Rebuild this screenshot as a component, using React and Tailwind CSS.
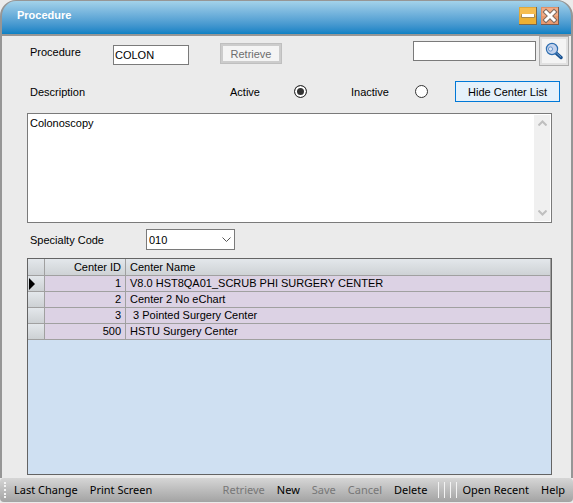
import React, { useState } from "react";

const centers = [
  { id: 1, name: "V8.0 HST8QA01_SCRUB PHI SURGERY CENTER" },
  { id: 2, name: "Center 2 No eChart" },
  { id: 3, name: "\u00a03 Pointed Surgery Center" },
  { id: 500, name: "HSTU Surgery Center" },
];

function TitleBar() {
  return (
    <header className="flex h-9 shrink-0 items-start justify-between rounded-t-2xl border-2 border-t border-[#969696] bg-linear-to-b from-[#a3d2ea] to-[#0881c4] pr-3 pl-[15px]">
      <h1 className="pt-1.5 text-[11px] leading-4 font-bold text-white">Procedure</h1>
      <div className="flex gap-1 pt-1.5">
        <button type="button" aria-label="Minimize" className="size-[18px]">
          <svg viewBox="0 0 18 18" className="size-[18px]">
            <rect width="18" height="18" fill="#7b684c" />
            <rect width="17" height="17" fill="#dfa83c" />
            <rect x="1" y="1" width="16" height="16" fill="#f5bd50" />
            <path d="M1 17V9h16v8z" fill="#edb034" />
            <rect x="2" y="7" width="14" height="4" rx="1" fill="#a88b50" />
            <rect x="3" y="7" width="12" height="3" fill="#fff" />
          </svg>
        </button>
        <button type="button" aria-label="Close" className="size-[18px]">
          <svg viewBox="0 0 18 18" className="size-[18px]">
            <rect width="18" height="18" fill="#7b5a4c" />
            <rect width="17" height="17" fill="#df9068" />
            <rect x="1" y="1" width="16" height="16" fill="#f2aa84" />
            <path d="M1 17V9h16v8z" fill="#e99a70" />
            <path d="M5 5l8 8M13 5l-8 8" stroke="#806b60" strokeWidth="5" strokeLinecap="square" />
            <path d="M5 5l8 8M13 5l-8 8" stroke="#fff" strokeWidth="3" strokeLinecap="square" />
          </svg>
        </button>
      </div>
    </header>
  );
}

function SearchIcon() {
  return (
    <svg viewBox="0 0 18 18" className="size-[18px]">
      <path d="M11 11l5 4.500" stroke="#174f8e" strokeWidth="3.400" strokeLinecap="round" />
      <path d="M11.500 11l4.300 4" stroke="#6fa3d6" strokeWidth="1" strokeLinecap="round" />
      <circle cx="7" cy="7" r="5.600" fill="#c3d2ec" stroke="#2e6eb0" strokeWidth="1.200" />
      <circle cx="5.500" cy="7" r="2.100" fill="#dce8f8" stroke="#6c98cd" />
    </svg>
  );
}

function Chevron({ className }) {
  return (
    <svg viewBox="0 0 9 6" className={className} fill="none" stroke="currentColor">
      <path d="M0.500 0.500l4 4 4-4" />
    </svg>
  );
}

function StatusRadio({ id, checked, onChange }) {
  return (
    <input
      id={id}
      type="radio"
      name="status"
      checked={checked}
      onChange={onChange}
      className="size-[13px] appearance-none rounded-full border border-[#333] bg-white checked:bg-[#333] checked:shadow-[inset_0_0_0_2px_#fff]"
    />
  );
}

function CenterTable() {
  return (
    <div className="min-h-[217px] flex-1 border border-[#646464] bg-[#cfe0f2]">
      <table className="w-full table-fixed border-separate border-spacing-0 text-[11px] leading-[15px]">
        <colgroup>
          <col className="w-[17px]" />
          <col className="w-[81px]" />
          <col />
        </colgroup>
        <thead>
          <tr className="h-[17px] bg-linear-to-b from-[#e3e7eb] to-[#cdd1d4]">
            <th aria-label="Row" className="border-r border-b border-[#a0a0a0] p-0" />
            <th className="border-r border-b border-[#a0a0a0] py-0 pr-1 pl-0 text-right font-normal">Center ID</th>
            <th className="border-r border-b border-[#a0a0a0] py-0 pr-0 pl-1 text-left font-normal">Center Name</th>
          </tr>
        </thead>
        <tbody>
          {centers.map((center, index) => (
            <tr key={center.id} className="h-4 bg-[#dcd2e4]">
              <td className="border-r border-b border-[#a0a0a0] bg-linear-to-b from-[#e3e7eb] to-[#cdd1d4] p-0">
                {index === 0 && (
                  <svg viewBox="0 0 6 12" className="ml-px h-3 w-1.5">
                    <path d="M0 0l6 6-6 6z" />
                  </svg>
                )}
              </td>
              <td className="border-r border-b border-[#a0a0a0] py-0 pr-1 pl-0 text-right">{center.id}</td>
              <td className="border-r border-b border-[#a0a0a0] py-0 pr-0 pl-1 whitespace-nowrap">{center.name}</td>
            </tr>
          ))}
        </tbody>
      </table>
    </div>
  );
}

function ActionBar() {
  return (
    <footer className="flex h-6 shrink-0 items-center justify-between rounded bg-linear-to-b from-[#d6d6d6] to-[#a3a3a3] pr-2 pl-1 font-['Noto_Sans',sans-serif] text-[11px] leading-4 whitespace-nowrap">
      <div className="flex items-center">
        <div className="mr-2 h-4 border-l-2 border-dotted border-[#f3f3f3]" />
        <div className="flex gap-3">
          <button type="button">Last Change</button>
          <button type="button">Print Screen</button>
        </div>
      </div>
      <div className="flex items-center">
        <div className="flex gap-3">
          <button type="button" disabled className="text-[#777]">Retrieve</button>
          <button type="button">New</button>
          <button type="button" disabled className="text-[#777]">Save</button>
          <button type="button" disabled className="text-[#777]">Cancel</button>
          <button type="button">Delete</button>
        </div>
        <div className="mr-1.5 ml-2.5 flex gap-[5px]">
          <span className="h-4 w-px bg-[#f3f3f3]" />
          <span className="h-4 w-px bg-[#f3f3f3]" />
          <span className="h-4 w-px bg-[#f3f3f3]" />
          <span className="h-4 w-px bg-[#f3f3f3]" />
        </div>
        <div className="flex gap-3">
          <button type="button">Open Recent</button>
          <button type="button">Help</button>
        </div>
      </div>
    </footer>
  );
}

export default function App() {
  const [status, setStatus] = useState("active");
  const [code, setCode] = useState("COLON");
  const [query, setQuery] = useState("");
  const [description, setDescription] = useState("Colonoscopy");

  return (
    <div className="flex min-h-screen flex-col bg-[#ebebeb] pb-px font-['Liberation_Sans',Arial,sans-serif] text-[11px] leading-4 text-black">
      <TitleBar />
      <main className="flex flex-1 flex-col border-x-2 border-[#969696] pb-[3px] pl-[25px]">
        <div className="flex items-start pr-0.5">
          <label htmlFor="procedure" className="ml-[3px] w-[83px] pt-2">Procedure</label>
          <input
            id="procedure"
            value={code}
            onChange={(e) => setCode(e.target.value)}
            className="mt-[9px] h-5 w-[76px] border border-[#7a7a7a] bg-white px-px"
          />
          <button type="button" disabled className="mt-[7px] ml-[31px] h-[21px] w-[62px] border border-[#bfbfbf] bg-[#f4f4f4] text-center leading-4 text-[#6d6d6d] shadow-[inset_0_0_0_2px_#ccc]">
            Retrieve
          </button>
          <input
            type="search"
            aria-label="Search procedures"
            value={query}
            onChange={(e) => setQuery(e.target.value)}
            className="mt-[5px] ml-auto h-5 w-[123px] border border-[#7a7a7a] bg-white px-px"
          />
          <button type="button" aria-label="Search" className="ml-[3px] flex size-[30px] items-center justify-center border border-[#adadad] bg-[#f4f4f4] shadow-[inset_0_0_0_2px_#e1e1e1]">
            <SearchIcon />
          </button>
        </div>

        <div className="mt-[15px] mr-[11px] flex h-[21px] items-center">
          <label htmlFor="description" className="ml-[3px] w-[200px]">Description</label>
          <label htmlFor="active" className="w-16">Active</label>
          <StatusRadio id="active" checked={status === "active"} onChange={() => setStatus("active")} />
          <label htmlFor="inactive" className="ml-11 w-16">Inactive</label>
          <StatusRadio id="inactive" checked={status === "inactive"} onChange={() => setStatus("inactive")} />
          <button type="button" className="ml-auto h-[21px] w-[105px] border border-[#0078d7] bg-[#e5f1fb] whitespace-nowrap">
            Hide Center List
          </button>
        </div>

        <div className="mt-[11px] mr-[19px] flex h-[110px] border border-[#7a7a7a] bg-white p-px">
          <textarea
            id="description"
            value={description}
            onChange={(e) => setDescription(e.target.value)}
            className="flex-1 resize-none px-px outline-none"
          />
          <div className="flex w-4 flex-col items-center justify-between bg-[#f0f0f0] py-[5px] text-[#bfbfbf]">
            <Chevron className="h-1.5 w-[9px] rotate-180 stroke-2" />
            <Chevron className="h-1.5 w-[9px] stroke-2" />
          </div>
        </div>

        <div className="mt-1.5 flex h-[21px] items-center">
          <label htmlFor="specialty" className="ml-[3px] w-[116px]">Specialty Code</label>
          <div className="relative h-[21px] w-[89px]">
            <select id="specialty" defaultValue="010" className="block size-full appearance-none border border-[#7a7a7a] bg-white pr-5 pl-0.5">
              <option value="010">010</option>
            </select>
            <Chevron className="pointer-events-none absolute top-2 right-1 h-1.5 w-[9px] text-[#555]" />
          </div>
        </div>

        <div className="mt-2 mr-[19px] flex flex-1 flex-col">
          <CenterTable />
        </div>
      </main>
      <ActionBar />
    </div>
  );
}
